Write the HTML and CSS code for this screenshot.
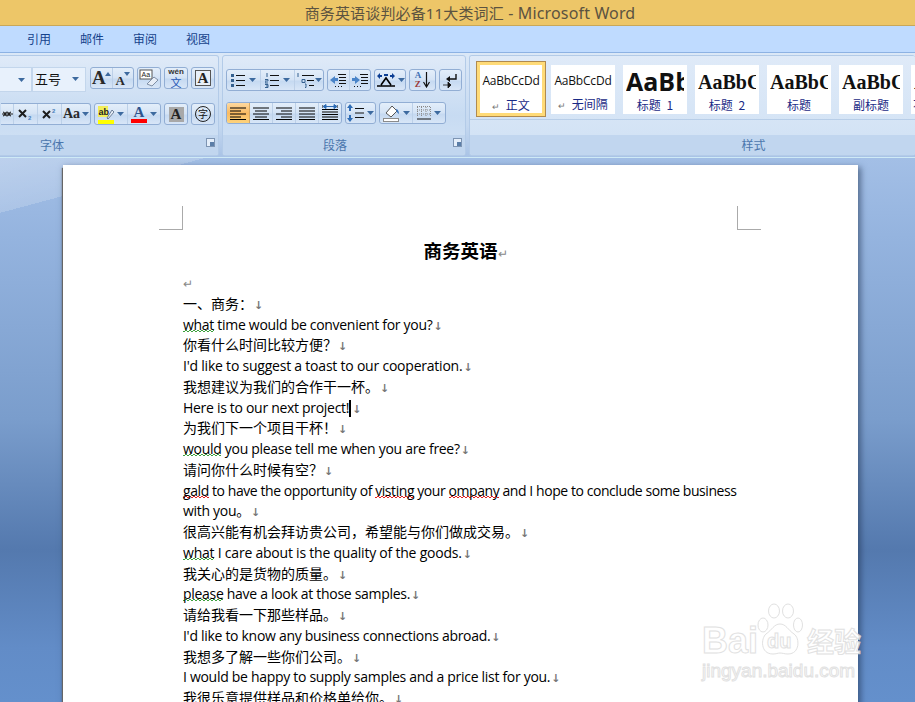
FILE: index.html
```html
<!DOCTYPE html>
<html lang="zh-CN">
<head>
  <meta charset="UTF-8" />
  <title>商务英语谈判必备11大类词汇 - Microsoft Word</title>
  <link rel="stylesheet" href="styles.css">
</head>
<body>

  <div class="titlebar">商务英语谈判必备11大类词汇<span class="app-name"> - Microsoft Word</span></div>

  <div class="tabs">
    <span class="tab">引用</span>
    <span class="tab">邮件</span>
    <span class="tab">审阅</span>
    <span class="tab">视图</span>
  </div>

  <div class="ribbon">

    <div class="group group-font">
      <div class="group-body">
        <div class="row row-font-1">
          <div class="combo combo-name"><svg class="drop" width="7" height="4"><path d="M0 0h7L3.500 4z"/></svg></div>
          <div class="combo combo-size">五号<svg class="drop" width="7" height="4"><path d="M0 0h7L3.500 4z"/></svg></div>
          <div class="btns w-44">
            <span class="btn grow"><b class="serif-a big">A</b><svg class="tri" width="6" height="4"><path d="M0 4h6L3 0z"/></svg></span>
            <span class="btn grow"><b class="serif-a small">A</b><svg class="tri" width="6" height="4"><path d="M0 0h6L3 4z"/></svg></span>
          </div>
          <span class="btns btn-one w-24">
            <svg width="20" height="18" viewBox="0 0 20 18"><rect x="1" y="1" width="12" height="9" fill="#fff" stroke="#555"/><text x="2.500" y="8" class="tiny">Aa</text><path d="M8 15l7-7 4 3-6 6z" fill="#e8eef7" stroke="#7f8fa5"/></svg>
          </span>
          <span class="btns btn-one w-24 wen">
            <span class="wen-top">wén</span><span class="wen-bot">文</span>
          </span>
          <span class="btns btn-one w-24"><span class="box-a">A</span></span>
        </div>
        <div class="row row-font-2">
          <div class="btns w-90">
            <span class="btn b-strike"><svg width="11" height="6" viewBox="0 0 11 6"><path d="M0 3h11M1 1c2 0 2 4 4 4s2-4 4-4M1 5c2 0 2-4 4-4s2 4 4 4" fill="none" stroke="#222" stroke-width="1.200"/></svg></span>
            <span class="btn b-script">
              <svg width="15" height="14" viewBox="0 0 15 14"><path d="M1 3l7 7M8 3l-7 7" stroke="#1c1c1c" stroke-width="2"/><text x="10" y="13" class="script">2</text></svg>
            </span>
            <span class="btn b-script">
              <svg width="15" height="14" viewBox="0 0 15 14"><path d="M1 4l7 7M8 4l-7 7" stroke="#1c1c1c" stroke-width="2"/><text x="10" y="6" class="script">2</text></svg>
            </span>
            <span class="btn aa"><b class="serif-a">Aa</b><svg class="drop" width="7" height="4"><path d="M0 0h7L3.500 4z"/></svg></span>
          </div>
          <div class="btns w-66">
            <span class="btn color-btn">
              <svg width="16" height="19" viewBox="0 0 16 19"><rect x="0" y="1" width="10" height="11" fill="#f2ee5a"/><text x="0.500" y="10" class="ab">ab</text><path d="M9 13l5-8 2 2-6 7z" fill="#e5ecf5" stroke="#6d7f98"/><rect x="0" y="15" width="16" height="4" fill="#ff0"/></svg>
              <svg class="drop" width="7" height="4"><path d="M0 0h7L3.500 4z"/></svg>
            </span>
            <span class="btn color-btn">
              <span class="color-a">A<i></i></span>
              <svg class="drop" width="7" height="4"><path d="M0 0h7L3.500 4z"/></svg>
            </span>
          </div>
          <span class="btns btn-one w-24"><span class="shade-a">A</span></span>
          <span class="btns btn-one w-24"><span class="circle-zi">字</span></span>
        </div>
      </div>
      <div class="group-label">字体<svg class="launcher" width="9" height="9"><rect x=".5" y=".5" width="8" height="8" fill="#e4eefa" stroke="#7d94b2"/><rect x="4" y="4" width="4" height="4" fill="#5b7ea8"/></svg></div>
    </div>

    <div class="group group-para">
      <div class="group-body">
        <div class="row row-para-1">
          <div class="btns w-98">
            <span class="btn b-list-1"><svg width="14" height="15" viewBox="0 0 14 15"><path d="M5 2.500h9M5 7.500h9M5 12.500h9" stroke="#111"/><path d="M0 1h3v3H0zM0 6h3v3H0zM0 11h3v3H0z" fill="#34608f"/></svg><svg class="drop" width="7" height="4"><path d="M0 0h7L3.500 4z"/></svg></span>
            <span class="btn b-list-1"><svg width="14" height="15" viewBox="0 0 14 15"><path d="M5 2.500h9M5 7.500h9M5 12.500h9" stroke="#111"/><path d="M2 0v4M0 6.500h3v1.500H0v2h3M0 11.500h3v3H0M1 13h2" fill="none" stroke="#34608f"/></svg><svg class="drop" width="7" height="4"><path d="M0 0h7L3.500 4z"/></svg></span>
            <span class="btn b-list-2"><svg width="17" height="15" viewBox="0 0 17 15"><path d="M5 2.500h12M10 7.500h7M12 12.500h5" stroke="#111"/><path d="M1 0v4M5 6.500h3v3H5zM8 11h1v3.500H8" fill="none" stroke="#34608f"/></svg><svg class="drop" width="7" height="4"><path d="M0 0h7L3.500 4z"/></svg></span>
          </div>
          <div class="btns w-44">
            <span class="btn"><svg width="18" height="15" viewBox="0 0 18 15"><path d="M9 1.500h8M10 4.500h7M10 7.500h7M10 10.500h7M6 13.500h1M9 13.500h1M12 13.500h1" stroke="#111"/><path d="M1 7l5-4v2h3v3H6v3z" fill="#4a84c8"/></svg></span>
            <span class="btn"><svg width="18" height="15" viewBox="0 0 18 15"><path d="M9 1.500h8M10 4.500h7M10 7.500h7M10 10.500h7M3 13.500h1M6 13.500h1M9 13.500h1" stroke="#111"/><path d="M9 7L4 3v2H1v3h3v3z" fill="#4a84c8"/></svg></span>
          </div>
          <div class="btns w-32 one-drop">
            <svg width="20" height="16" viewBox="0 0 20 16"><path d="M1 14h18M5 13L10 6l5 7" fill="none" stroke="#000" stroke-width="1.600"/><path d="M1 4l3-3v2h2v2H4v2zM19 4l-3-3v2h-2v2h2v2z" fill="#0d3f94"/><path d="M8 3h4" stroke="#0d3f94" stroke-width="2"/></svg>
            <svg class="drop" width="7" height="4"><path d="M0 0h7L3.500 4z"/></svg>
          </div>
          <span class="btns btn-one w-27 sort">
            <span class="sort-az"><i>A</i><em>Z</em></span>
            <svg width="7" height="16" viewBox="0 0 7 16"><path d="M3.500 0v14M.5 10l3 5 3-5" fill="none" stroke="#111" stroke-width="1.200"/></svg>
          </span>
          <span class="btns btn-one w-23">
            <svg width="15" height="15" viewBox="0 0 15 15"><path d="M13 1v5H6" fill="none" stroke="#111" stroke-width="1.400"/><path d="M7 3L3 6l4 3z" fill="#111"/><path d="M0 12h5M5 9l3 3-3 3z" fill="#111" stroke="#111" stroke-width=".8"/></svg>
          </span>
        </div>
        <div class="row row-para-2">
          <div class="btns w-116">
            <span class="btn on align"><svg width="16" height="13" viewBox="0 0 16 13"><path d="M0 1h16M0 4h11M0 7h16M0 10h11M0 12.500h16" stroke="#000"/></svg></span>
            <span class="btn align"><svg width="16" height="13" viewBox="0 0 16 13"><path d="M0 1h16M2 4h12M0 7h16M2 10h12M0 12.500h16" stroke="#000"/></svg></span>
            <span class="btn align"><svg width="16" height="13" viewBox="0 0 16 13"><path d="M0 1h16M5 4h11M0 7h16M5 10h11M0 12.500h16" stroke="#000"/></svg></span>
            <span class="btn align"><svg width="16" height="13" viewBox="0 0 16 13"><path d="M0 1h16M0 4h16M0 7h16M0 10h16M0 12.500h16" stroke="#000"/></svg></span>
            <span class="btn align"><svg width="16" height="18" viewBox="0 0 16 18"><path d="M0 5.500h16M0 8h16M0 10.500h16M0 13h16M0 15.500h16M0 1v3M16 1v3" stroke="#000"/><path d="M1 2.500l3-2v4zM15 2.500l-3-2v4zM4 2.500h8" fill="#2e6cb5" stroke="#2e6cb5"/></svg></span>
          </div>
          <div class="btns w-31 one-drop">
            <svg width="18" height="18" viewBox="0 0 18 18"><path d="M8 4.500h9M8 9h9M8 13.500h9" stroke="#111"/><path d="M3 0l3 4H4v3H2V4H0zM3 18l3-4H4v-3H2v3H0z" fill="#2e6cb5"/></svg>
            <svg class="drop" width="7" height="4"><path d="M0 0h7L3.500 4z"/></svg>
          </div>
          <div class="btns w-66">
            <span class="btn color-btn">
              <svg width="17" height="18" viewBox="0 0 17 18"><path d="M3 9l6-7 5 5-6 6z" fill="#fff" stroke="#555"/><path d="M13 5c2 0 3 3 3 5-2-1-3-3-3-5z" fill="#3a76c0"/><rect x=".5" y="14.500" width="15" height="3" fill="#fff" stroke="#8b8b8b"/></svg>
              <svg class="drop" width="7" height="4"><path d="M0 0h7L3.500 4z"/></svg>
            </span>
            <span class="btn color-btn">
              <svg width="14" height="14" viewBox="0 0 14 14"><path d="M.5 1v10M4.500 1v10M9 1v10M13.500 1v10M0 .5h14M0 4h14M0 8h14" fill="none" stroke="#8a8a8a" stroke-dasharray="1 1"/><path d="M0 13h14" stroke="#111"/></svg>
              <svg class="drop" width="7" height="4"><path d="M0 0h7L3.500 4z"/></svg>
            </span>
          </div>
        </div>
      </div>
      <div class="group-label">段落<svg class="launcher" width="9" height="9"><rect x=".5" y=".5" width="8" height="8" fill="#e4eefa" stroke="#7d94b2"/><rect x="4" y="4" width="4" height="4" fill="#5b7ea8"/></svg></div>
    </div>

    <div class="group group-styles">
      <div class="group-body gallery">
        <div class="style-item selected"><span class="sample s-body">AaBbCcDd</span><span class="style-name"><i class="mark">↵</i> 正文</span></div>
        <div class="style-item"><span class="sample s-body">AaBbCcDd</span><span class="style-name"><i class="mark">↵</i> 无间隔</span></div>
        <div class="style-item"><span class="sample s-h1">AaBb</span><span class="style-name">标题 1</span></div>
        <div class="style-item"><span class="sample s-h2">AaBbC</span><span class="style-name">标题 2</span></div>
        <div class="style-item"><span class="sample s-h2">AaBbC</span><span class="style-name">标题</span></div>
        <div class="style-item"><span class="sample s-h2">AaBbC</span><span class="style-name">副标题</span></div>
        <div class="style-item"><span class="sample s-h2">AaBbC</span><span class="style-name">不明显强调</span></div>
      </div>
      <div class="group-label">样式</div>
    </div>

  </div>

  <div class="workspace">
    <div class="page">
      <div class="margin-marks"><span class="corner corner-l"></span><span class="corner corner-r"></span></div>
      <h1 class="doc-title">商务英语<i class="ret">↵</i></h1>
      <div class="doc-text">
        <p><i class="ret">↵</i></p>
        <p class="cn">一、商务：<i class="nl">↓</i></p>
        <p><u class="gr">what</u> time would be convenient for you?<i class="nl">↓</i></p>
        <p class="cn">你看什么时间比较方便？<i class="nl">↓</i></p>
        <p class="loose">I'd like to suggest a toast to our cooperation.<i class="nl">↓</i></p>
        <p class="cn">我想建议为我们的合作干一杯。<i class="nl">↓</i></p>
        <p>Here is to our next project!<span class="caret"></span><i class="nl">↓</i></p>
        <p class="cn">为我们下一个项目干杯！<i class="nl">↓</i></p>
        <p><u class="gr">would</u> you please tell me when you are free?<i class="nl">↓</i></p>
        <p class="cn">请问你什么时候有空？<i class="nl">↓</i></p>
        <p class="tight"><u class="sp">gald</u> to have the opportunity of <u class="sp">visting</u> your <u class="sp">ompany</u> and I hope to conclude some business</p>
        <p>with you。<i class="nl">↓</i></p>
        <p class="cn">很高兴能有机会拜访贵公司，希望能与你们做成交易。<i class="nl">↓</i></p>
        <p class="loose"><u class="gr">what</u> I care about is the quality of the goods.<i class="nl">↓</i></p>
        <p class="cn">我关心的是货物的质量。<i class="nl">↓</i></p>
        <p><u class="gr">please</u> have a look at those samples.<i class="nl">↓</i></p>
        <p class="cn">请给我看一下那些样品。<i class="nl">↓</i></p>
        <p>I'd like to know any business connections abroad.<i class="nl">↓</i></p>
        <p class="cn">我想多了解一些你们公司。<i class="nl">↓</i></p>
        <p>I would be happy to supply samples and a price list for you.<i class="nl">↓</i></p>
        <p class="cn">我很乐意提供样品和价格单给你。<i class="nl">↓</i></p>
      </div>
    </div>
  </div>

  <div class="watermark">
    <svg class="paw" width="46" height="55" viewBox="0 0 46 55">
      <ellipse cx="6" cy="22" rx="5" ry="7"/>
      <ellipse cx="17" cy="8" rx="5.500" ry="7"/>
      <ellipse cx="31" cy="8" rx="5.500" ry="7"/>
      <ellipse cx="41" cy="22" rx="4.500" ry="7"/>
      <path d="M23 21c-6 0-8 6-14 10-5 4-6 20 7 20 3 0 5-1 7-1s5 1 8 1c12 0 12-16 6-20-6-4-8-10-14-10z"/>
    </svg>
    <span class="wm-bai">Bai</span>
    <span class="wm-du">du</span>
    <span class="wm-jy">经验</span>
    <span class="wm-url">jingyan.baidu.com</span>
  </div>

</body>
</html>
```

FILE: styles.css
```css
* {
  box-sizing: border-box;
}

html,
body {
  margin: 0;
  padding: 0;
  height: 702px;
  overflow: hidden;
}

body {
  position: relative;
  font-family: "Noto Sans CJK SC", "Noto Sans", sans-serif;
  background: #6490cc;
  display: flex;
  flex-direction: column;
}

i,
em {
  font-style: normal;
}

.titlebar {
  height: 26px;
  flex: none;
  background: #edc668;
  border-bottom: 1px solid #c9a758;
  color: #5c5340;
  font-size: 15px;
  line-height: 27px;
  letter-spacing: .15px;
  text-align: center;
  padding-left: 25px;
  font-family: "Noto Sans", "Noto Sans CJK SC", sans-serif;
}

.app-name {
  font-size: 16px;
}

.tabs {
  height: 27px;
  flex: none;
  background: #bfdbff;
  border-bottom: 1px solid #8db2e3;
  display: flex;
  padding-left: 27px;
  gap: 29px;
  font-size: 12px;
  line-height: 26px;
  color: #15428b;
}

/* ribbon */

.ribbon {
  height: 105px;
  flex: none;
  background: linear-gradient(#dbe8f7, #c4d8f0 70%, #a9c3e6);
  display: flex;
  padding: 2px 0 1px;
  gap: 3px;
  overflow: hidden;
  border-bottom: 1px solid #cfeaf6;
}

.group {
  flex: none;
  display: flex;
  flex-direction: column;
  border: 1px solid #b3cbe8;
  border-radius: 3px;
  background: linear-gradient(#dfeaf8, #c7dbf2 60%, #d3e3f5);
  overflow: hidden;
}

.group-font {
  width: 219px;
  border-left: 0;
  border-radius: 0 3px 3px 0;
}

.group-para {
  width: 244px;
}

.group-styles {
  flex: 1;
  min-width: 0;
  border-right: 0;
}

.group-body {
  flex: 1;
  display: flex;
  flex-direction: column;
  min-height: 0;
}

.group-label {
  height: 20px;
  flex: none;
  position: relative;
  background: #c1d6ef;
  color: #4b76ad;
  font-size: 12px;
  line-height: 20px;
  text-align: center;
}

.group-font .group-label {
  padding-right: 114px;
}

.group-para .group-label {
  padding-right: 18px;
}

.group-styles .group-label {
  padding-left: 122px;
}

.launcher {
  position: absolute;
  right: 3px;
  top: 3px;
}

.row {
  display: flex;
  align-items: flex-start;
}

.row-font-1 {
  justify-content: flex-end;
  padding: 11px 3px 0 0;
  height: 47px;
  gap: 3px;
}

.row-font-2 {
  justify-content: flex-end;
  padding: 0 3px 0 0;
  gap: 3px;
}

.row-para-1 {
  padding: 13px 0 0 3px;
  height: 46px;
  gap: 3px;
}

.row-para-2 {
  padding-left: 3px;
  gap: 3px;
}

.combo {
  height: 25px;
  background: #e8f1fc;
  border: 1px solid #c3d6ec;
  display: flex;
  align-items: center;
  justify-content: flex-end;
  padding-right: 6px;
  font-size: 13px;
  color: #111;
  flex: none;
  margin-right: -3px;
}

.combo-name {
  width: 32px;
  border-left: 0;
}

.combo-size {
  width: 54px;
  justify-content: space-between;
  padding-left: 2px;
  padding-bottom: 2px;
  margin-right: 1px;
}

.drop {
  fill: #3d6a9f;
  flex: none;
}

.tri {
  fill: #3d6a9f;
  margin: 4px 0 0 -1px;
  align-self: flex-start;
}

.btns {
  height: 22px;
  flex: none;
  display: flex;
  align-items: center;
  justify-content: center;
  background: linear-gradient(#e3eefa, #d4e3f5 50%, #c5d9f1 55%, #d8e6f7);
  border: 1px solid #92aed4;
  border-radius: 3px;
  overflow: hidden;
}

.w-23 { width: 23px; }
.w-24 { width: 24px; }
.w-27 { width: 27px; }
.w-31 { width: 31px; }
.w-32 { width: 32px; }
.w-44 { width: 44px; }
.w-66 { width: 67px; }
.w-90 { width: 90px; }
.w-98 { width: 98px; }
.w-116 { width: 116px; }

.w-90 {
  border-left: 0;
  border-radius: 0 3px 3px 0;
  justify-content: flex-end;
}

.one-drop {
  gap: 2px;
}

.btn {
  flex: 1;
  height: 100%;
  display: flex;
  align-items: center;
  justify-content: center;
  border-right: 1px solid #bcd0e8;
  gap: 2px;
}

.btn:last-child {
  border-right: 0;
}

.btn.on {
  background: linear-gradient(#fdd9a0, #fbbb62 50%, #fdd37c);
  border-right-color: #d4a867;
}

.b-strike {
  flex: none;
  width: 13px;
}

.b-script {
  flex: none;
  width: 24px;
}

.aa {
  flex: none;
  width: 28px;
}

.b-list-1 {
  flex: none;
  width: 34px;
  gap: 4px;
}

.b-list-2 {
  flex: 1;
  gap: 1px;
}

.grow {
  align-items: flex-end;
  padding-bottom: 1px;
  gap: 0;
}

.serif-a {
  font-family: "Liberation Serif", serif;
  color: #2a2a2a;
  line-height: 1;
}

.serif-a.big {
  font-size: 19px;
}

.serif-a.small {
  font-size: 13px;
}

.aa .serif-a {
  font-size: 14px;
}

.tiny {
  font: 7px "Liberation Sans", sans-serif;
  fill: #222;
}

.ab {
  font: bold 9px "Liberation Sans", sans-serif;
  fill: #222;
}

.script {
  font: bold 6px "Liberation Sans", sans-serif;
  fill: #4a7ebb;
}

.wen {
  flex-direction: column;
  color: #2658b5;
}

.wen-top {
  font: bold 8px/8px "Liberation Sans", sans-serif;
  color: #333;
}

.wen-bot {
  font-size: 11px;
  line-height: 12px;
}

.box-a {
  width: 16px;
  height: 16px;
  border: 1px solid #555;
  background: #e8eff8;
  font: bold 15px/14px "Liberation Serif", serif;
  text-align: center;
  color: #222;
}

.color-btn {
  gap: 3px;
}

.color-a {
  width: 16px;
  display: flex;
  flex-direction: column;
  align-items: center;
  font: bold 15px/14px "Liberation Serif", serif;
  color: #30558e;
}

.color-a i {
  display: block;
  width: 16px;
  height: 4px;
  background: #f00;
}

.shade-a {
  width: 15px;
  height: 15px;
  background: #a8a8a8;
  font: bold 15px/15px "Liberation Serif", serif;
  text-align: center;
  color: #222;
}

.circle-zi {
  width: 16px;
  height: 16px;
  border: 1px solid #222;
  border-radius: 50%;
  font-size: 10px;
  line-height: 14px;
  text-align: center;
  color: #111;
}

.sort {
  gap: 2px;
}

.sort-az {
  display: flex;
  flex-direction: column;
  font: bold 9px/9px "Liberation Serif", serif;
}

.sort-az i {
  color: #3d6fb4;
}

.sort-az em {
  color: #9c3a3a;
}

/* styles gallery */

.gallery {
  flex-direction: row;
  align-items: flex-start;
  gap: 8px;
  padding: 9px 0 0 6px;
  background: linear-gradient(#b8cee8, #b8cee8) 0 63px / 100% 1px no-repeat, linear-gradient(#dfeaf8, #d3e3f5);
}

.style-item {
  width: 64px;
  height: 49px;
  flex: none;
  background: #fff;
  display: flex;
  flex-direction: column;
  align-items: center;
  overflow: hidden;
}

.style-item.selected {
  width: 70px;
  height: 56px;
  margin: -4px -3px 0 0;
  border: 1px solid #b08a4f;
  box-shadow: inset 0 0 0 3px #ffdb78;
  padding-top: 3px;
}

.sample {
  height: 32px;
  width: 58px;
  overflow: hidden;
  white-space: nowrap;
  color: #111;
  display: block;
}

.s-body {
  font: 12px/32px "Open Sans", sans-serif;
  letter-spacing: -.2px;
  text-align: center;
}

.s-h1 {
  font: bold 25px/32px "Open Sans", sans-serif;
}

.s-h2 {
  font: bold 20px/34px "Liberation Serif", serif;
}

.style-name {
  font-size: 12px;
  line-height: 16px;
  color: #1a2a86;
  white-space: nowrap;
  word-spacing: 3px;
}

.mark {
  color: #777;
  font-size: 9px;
}

/* document */

.workspace {
  flex: 1;
  min-height: 0;
  padding: 7px 57px 0 63px;
  background:
    linear-gradient(165deg, rgba(255, 255, 255, .28) 0, rgba(255, 255, 255, .18) 53px, transparent 53px),
    linear-gradient(#a3bfe6, #95b4df 14%, #7a9dcc 48%, #5479ae 72%, #628cc7 90%, #6490cc);
  overflow: hidden;
}

.page {
  background: #fff;
  height: 600px;
  padding: 0 96px 0 120px;
  box-shadow: -1px 3px 1px #666, 2px 3px 6px 1px rgba(30, 50, 80, .55);
  color: #000;
}

.margin-marks {
  display: flex;
  justify-content: space-between;
  margin: 0 0 0 -24px;
  width: 602px;
  height: 63px;
  padding-top: 41px;
}

.corner {
  width: 24px;
  height: 24px;
  display: block;
}

.corner-l {
  border-right: 1px solid #aaa;
  border-bottom: 1px solid #aaa;
}

.corner-r {
  border-left: 1px solid #aaa;
  border-bottom: 1px solid #aaa;
}

.doc-title {
  margin: 0;
  height: 45px;
  font-size: 18.5px;
  font-weight: bold;
  line-height: 45px;
  text-align: center;
  padding-right: 14px;
}

.ret {
  color: #888;
  font-size: 12px;
  font-weight: normal;
}

.doc-text p {
  margin: 0;
  height: 20.75px;
  font-size: 14px;
  line-height: 20.75px;
  white-space: nowrap;
  font-family: "Open Sans", "Noto Sans CJK SC", sans-serif;
  letter-spacing: -.3px;
}

.doc-text p.cn {
  letter-spacing: 0;
}

.doc-text p.loose {
  letter-spacing: -.22px;
}

.doc-text p.tight {
  letter-spacing: -.43px;
}

.nl {
  color: #777;
  font: bold 11px "DejaVu Sans", sans-serif;
  margin-left: 1px;
}

/* squiggles under flagged words */

u {
  text-decoration: none;
  --sq: #3ea03e;
  background:
    repeating-linear-gradient(90deg, var(--sq) 0 2px, transparent 2px 4px) 0 calc(100% - 2px) / 100% 1px no-repeat,
    repeating-linear-gradient(90deg, transparent 0 2px, var(--sq) 2px 4px) 0 calc(100% - 3px) / 100% 1px no-repeat;
}

u.sp {
  --sq: #e02020;
}

.caret {
  display: inline-block;
  width: 2px;
  height: 17px;
  background: #000;
  vertical-align: -4px;
}

/* baidu watermark */

.watermark {
  position: absolute;
  left: 696px;
  top: 600px;
  width: 175px;
  height: 84px;
  color: #fff;
  -webkit-text-stroke: 1px #dedede;
  opacity: .9;
}

.watermark span {
  position: absolute;
  white-space: nowrap;
}

.paw {
  position: absolute;
  left: 61px;
  top: 3px;
  fill: rgba(255, 255, 255, .5);
  stroke: #dedede;
}

.wm-bai {
  left: 6px;
  top: 21px;
  font: bold 36px/40px "Liberation Sans", sans-serif;
}

.wm-du {
  left: 71px;
  top: 30px;
  font: bold 20px/22px "Liberation Sans", sans-serif;
}

.wm-jy {
  left: 111px;
  top: 23px;
  font-size: 27px;
  line-height: 36px;
  font-weight: bold;
}

.wm-url {
  left: 6px;
  top: 60px;
  font: 19px/22px "Liberation Sans", sans-serif;
}
```
